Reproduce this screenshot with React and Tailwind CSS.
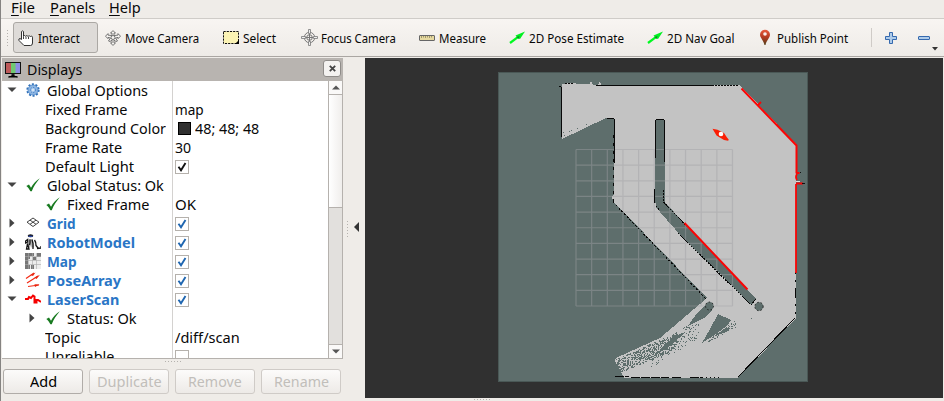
import { useLayoutEffect, useRef, useState } from "react";

// Text squeezed or stretched to a fixed advance width.
function Fit({ w, className = "", children }) {
  const ref = useRef(null);
  const [scale, setScale] = useState(1);
  useLayoutEffect(() => {
    setScale(w / ref.current.offsetWidth);
  }, [w]);
  return (
    <span
      ref={ref}
      className={"inline-block origin-left whitespace-nowrap " + className}
      style={{ transform: `scaleX(${scale})` }}
    >
      {children}
    </span>
  );
}

const Label = ({ w, className = "", children }) => (
  <Fit w={w} className={"text-[15px] leading-[19px] " + className}>{children}</Fit>
);

/* ---------- icons ---------- */

const Hand = () => (
  <svg width="16" height="16" viewBox="0 0 16 16" className="shrink-0">
    <path d="M3.500 9.500V1.500q1-1.300 2 0V6.500q.3-1 1-1t1.200 1q.4-1 1.100-1t1.200 1q.4-.8 1.100-.8t1.200 1q.3-.5 1.200-.5t1 1V13q0 2.500-2 2.500H6L1 10.500Q.3 8.500 2 8.500z" fill="#fff" stroke="#333" strokeWidth="1" />
    <path d="M5.500 7v2M8 7v2M10.500 7v2" stroke="#444" strokeWidth="1" />
  </svg>
);
const Move = () => (
  <svg width="16" height="16" viewBox="0 0 16 16" className="shrink-0">
    <g fill="#f6f4f1" stroke="#666" strokeWidth=".9">
      <path d="M8 .6l2.500 2.500H9v2.500l4-.5V3.600l2.500 2.600-2.500 2.500V7.400L10.500 8l2 3-1.500.5L9 10v3h1.500L8 15.400 5.500 13H7v-3l-2 1.500-1.500-.5 2-3L3 7.400v1.300L.5 6.200 3 3.600v1.500l4 .5V3.100H5.500z" />
      <circle cx="8" cy="7.500" r="2" />
    </g>
  </svg>
);
const SelectIcon = () => (
  <svg width="16" height="16" viewBox="0 0 16 16" className="shrink-0">
    <rect x=".5" y="1.500" width="15" height="12" fill="#fbf3b4" stroke="#111" strokeDasharray="2.200 1" />
    <path d="M16 10v4h-4z" fill="#000" />
  </svg>
);
const Focus = () => (
  <svg width="17" height="17" viewBox="0 0 17 17" className="shrink-0">
    <g fill="none" stroke="#777">
      <circle cx="8.500" cy="8.500" r="5.200" strokeWidth="1" />
      <circle cx="8.500" cy="8.500" r="2.800" strokeWidth="1" />
      <path d="M7.500.5h2v4h-2zM7.500 12.500h2v4h-2zM.5 7.500h4v2h-4zM12.500 7.500h4v2h-4z" fill="#eee" strokeWidth=".8" />
      <path d="M8.500 5v7M5 8.500h7" strokeWidth="1" />
    </g>
  </svg>
);
const Ruler = () => (
  <svg width="16" height="16" viewBox="0 0 16 16" className="shrink-0">
    <rect x=".5" y="5.500" width="15" height="5" rx=".5" fill="#e6d9a0" stroke="#666" />
    <path d="M2.500 6v2M4.500 6v1.500M6.500 6v2M8.500 6v1.500M10.500 6v2M12.500 6v1.500" stroke="#8d8560" strokeWidth=".8" />
  </svg>
);
const GreenArrow = () => (
  <svg width="16" height="16" viewBox="0 0 16 16" className="shrink-0">
    <path d="M1 13L8.500 7.300" stroke="#00fa20" strokeWidth="2.200" />
    <path d="M6.500 5.500L16 1.500 11 9 8.800 8.200z" fill="#00f020" />
    <path d="M7.500 7L10.500 6l-1 3z" fill="#0b8a26" />
  </svg>
);
const Pin = () => (
  <svg width="12" height="17" viewBox="0 0 12 17" className="shrink-0">
    <defs>
      <linearGradient id="pin" x1="0" y1="0" x2="0" y2="1">
        <stop offset="0" stopColor="#ea5a3c" />
        <stop offset=".5" stopColor="#b23a20" />
        <stop offset="1" stopColor="#51401a" />
      </linearGradient>
    </defs>
    <path d="M6 .7a5 5 0 0 1 5 5c0 3-3.500 5.500-4.500 10.300h-1C4.500 11.200 1 8.700 1 5.700a5 5 0 0 1 5-5z" fill="url(#pin)" />
    <circle cx="6" cy="5" r="1.800" fill="#f8efec" />
  </svg>
);
const Plus = () => (
  <svg width="12" height="12" viewBox="0 0 12 12" className="shrink-0">
    <path d="M4.500.5h3v4h4v3h-4v4h-3v-4h-4v-3h4z" fill="#aecbe9" stroke="#3569ae" />
  </svg>
);
const Minus = () => (
  <svg width="12" height="12" viewBox="0 0 12 12" className="shrink-0">
    <rect x=".5" y="4.500" width="11" height="3" rx=".5" fill="#aecbe9" stroke="#3569ae" />
  </svg>
);
const Monitor = () => (
  <svg width="16" height="16" viewBox="0 0 16 16" className="shrink-0">
    <rect x=".5" y=".5" width="15" height="11" fill="#000" stroke="#111" />
    <path d="M1 1h5v10H1z" fill="#bd5959" />
    <path d="M6 1h5v10H6z" fill="#70c970" />
    <path d="M10.500 1H15v10h-4.500z" fill="#8d8de4" />
    <path d="M6.500 12h3v2h-3z" fill="#222" />
    <path d="M3.500 15q4.500-2.500 9 0z" fill="#000" stroke="#000" />
  </svg>
);
const Gear = () => (
  <svg width="14" height="14" viewBox="0 0 14 14">
    <circle cx="7" cy="7" r="5.700" fill="none" stroke="#2f6fb8" strokeWidth="1.900" strokeDasharray="2 1.580" />
    <circle cx="7" cy="7" r="5" fill="#8fb7e4" stroke="#4b86c8" strokeWidth=".8" />
    <circle cx="7" cy="7" r="2.600" fill="#a9c9ec" stroke="#3f7cc2" strokeDasharray="1.400 1" />
    <circle cx="7" cy="7" r=".9" fill="#e9f2fb" />
  </svg>
);
const Tick = () => (
  <svg width="14" height="14" viewBox="0 0 14 14">
    <path d="M.3 8L3 6.500l2 3.300C7 6 10 2.500 13.800.3 10.300 4.500 7.500 8.500 5.800 13.300H4.400C3.200 11 2 9.300.3 8z" fill="#187a20" />
  </svg>
);
const GridIcon = () => (
  <svg width="14" height="12" viewBox="0 0 14 12">
    <path d="M7 1L13 5.200 7 9.500 1 5.200zM4 3.100L10 7.300M10 3.100L4 7.300" fill="none" stroke="#444" strokeWidth="1" />
  </svg>
);
const Robot = () => (
  <svg width="16" height="16" viewBox="0 0 16 16">
    <ellipse cx="5.500" cy="1.800" rx="2.800" ry="1.500" fill="#171717" />
    <path d="M3.500 2.300h4" stroke="#3150c4" strokeWidth="1.100" />
    <path d="M2 6l3-1 2.500.5 1 3 .5 5H6.500l-.5-3-1 3H2.500l.5-5z" fill="#b5b5b5" />
    <path d="M.6 7l2-1.500v2.500L.6 9zM2.500 9.500l1.500 5.500H1.500zM5 5.500v3.500l-.5 2M7 5.500l1 4v5.500M9.500 6q1.500 2 1.500 5.500l2 2.500M12 14.500l4-.5V12" stroke="#151515" strokeWidth="1.300" fill="none" />
  </svg>
);
const MapIcon = () => (
  <svg width="16" height="16" viewBox="0 0 16 16">
    <path d="M0 0h16v16H0z" fill="#ededed" />
    <path d="M0 0h9v3H5v3H0zM0 6h3v6H0zM8 4h3v3H8zM12 0h4v4h-4zM0 12h5v4H0zM6 12h3v4H6z" fill="#777" />
    <path d="M3.500 0v16M7.500 0v16M11.500 0v16M0 3.500h16M0 7.500h16M0 11.500h16" stroke="#aaa" strokeWidth=".6" />
  </svg>
);
const Poses = () => (
  <svg width="16" height="16" viewBox="0 0 16 16">
    <path d="M1 6.500L9 1M2 11L13 4M3 14.500L14 13" stroke="#f32a14" strokeWidth="1.200" />
    <path d="M5.500 3L10.500.4 8 4zM9.500 5.400L15 2.800 11.500 7zM9.500 12.300l5 .2L10 15z" fill="#e62510" />
  </svg>
);
const Laser = () => (
  <svg width="16" height="12" viewBox="0 0 16 12">
    <path d="M0 6h3l1-2 2 1 2-2.500 1.500 1V9.500h2V7h1.500L16 9" fill="none" stroke="#f50000" strokeWidth="2" />
  </svg>
);

/* ---------- tree ---------- */

const Box = ({ color, on = true }) => (
  <span className="flex h-[14px] w-[14px] items-center justify-center border border-[#b5b1ac] bg-white">
    {on && (
      <svg width="10" height="10" viewBox="0 0 10 10">
        <path d="M1.500 4.800L4 8.300 8.500 1" fill="none" stroke={color} strokeWidth="1.900" />
      </svg>
    )}
  </span>
);
const blueBox = <Box color="#1f66b0" />;

const rows = [
  { open: true, icon: <Gear />, text: "Global Options", w: 101 },
  { text: "Fixed Frame", w: 82, value: <Label w={29}>map</Label> },
  {
    text: "Background Color", w: 121,
    value: (
      <span className="flex items-center gap-1 pl-[2.500px]">
        <span className="h-[13px] w-[13px] border border-black bg-[#303030]" />
        <Label w={64}>48; 48; 48</Label>
      </span>
    ),
  },
  { text: "Frame Rate", w: 77, value: <Label w={16}>30</Label> },
  { text: "Default Light", w: 89, value: <Box color="#111" /> },
  { open: true, icon: <Tick />, text: "Global Status: Ok", w: 117 },
  { sub: true, icon: <Tick />, text: "Fixed Frame", w: 82, value: <Label w={21}>OK</Label> },
  { open: false, bold: true, icon: <GridIcon />, text: "Grid", w: 29, value: blueBox },
  { open: false, bold: true, icon: <Robot />, text: "RobotModel", w: 88, value: blueBox },
  { open: false, bold: true, icon: <MapIcon />, text: "Map", w: 30, value: blueBox },
  { open: false, bold: true, icon: <Poses />, text: "PoseArray", w: 74, value: blueBox },
  { open: true, bold: true, icon: <Laser />, text: "LaserScan", w: 72, value: blueBox },
  { sub: true, open: false, icon: <Tick />, text: "Status: Ok", w: 70 },
  { text: "Topic", w: 36, value: <Label w={65}>/diff/scan</Label> },
  { text: "Unreliable", w: 69, value: <Box on={false} /> },
];

const Twisty = ({ open }) => (
  <svg width="10" height="10" viewBox="0 0 10 10">
    <path d={open ? "M.5 2.500h9L5 7z" : "M2.500.5v9L7.500 5z"} fill="#444" />
  </svg>
);

function Row({ row }) {
  return (
    <div className="flex h-[19px] shrink-0 items-center">
      <div className={"flex h-full w-[171px] shrink-0 items-center border-r border-[#d4d2d0] pb-px " + (row.sub ? "pl-[25px]" : "pl-[5px]")}>
        <span className="flex w-[10px] justify-center">{row.open !== undefined && <Twisty open={row.open} />}</span>
        {row.icon && <span className="ml-[7px] flex w-[17px] justify-center">{row.icon}</span>}
        <span className={"flex " + (row.icon ? "ml-[6px]" : "ml-[28px]")}>
          <Label w={row.w} className={row.bold ? "font-bold text-[#2a76c6]" : ""}>{row.text}</Label>
        </span>
      </div>
      <div className="flex items-center pl-[2px]">{row.value}</div>
    </div>
  );
}

/* ---------- map ---------- */

function noise(seed) {
  let s = seed;
  return () => {
    s = (s * 1664525 + 1013904223) % 4294967296;
    return s / 4294967296;
  };
}

// Unit-pixel speckle path over the scattered scan region.
function speckle(seed, count, place) {
  const rnd = noise(seed);
  let d = "";
  for (let i = 0; i < count; i++) {
    const [x, y] = place(rnd);
    d += `M${Math.round(x)} ${Math.round(y)}h1v1h-1z`;
  }
  return d;
}
const fan = speckle(7, 620, (r) => {
  const t = r();
  const top = 359 - t * 28;
  const bottom = 374 - t * 26;
  return [616 + t * 62, top + r() * (bottom - top)];
});
const loose = speckle(19, 150, (r) => {
  const t = r();
  return [650 + t * 48, 354 - t * 30 + (r() - 0.3) * 20];
});
const tail = speckle(31, 70, (r) => {
  const t = r();
  return [708 + t * 28, 339 - t * 16 + (r() - 0.5) * 6];
});

const gridPath = Array.from({ length: 11 }, (_, i) => {
  const p = i * 15.65;
  return `M${576 + p} 149.500v156.500M576 ${149.5 + p}h156.500`;
}).join("");

const MapView = () => (
  <svg width="310" height="310" viewBox="498 72 310 310" className="block">
    <rect x="498" y="72" width="310" height="310" fill="#5e6e6c" />
    <g shapeRendering="crispEdges">
      <path d="M562 84h4l1-1h8l1 1h14l1-3 2 4h5l2-4 1 4h139l56 59v174l-58 60H624l-9-17 1-3 44-20 47-40-94-97-1-4 2-3V118h-8L562 139z" fill="#c3c3c3" />
      <path d="M655.500 120l1-1h7l1 1v82l92 97-5 6-73-72-22-25-2-10z" fill="#5e6e6c" />
      <path d="M706 304l-9 9-9 13 16-8 9-8zM718 314l13 6-3 5-12 9-14 9 8-14zM732 327l-9 3-9 6 12-4zM687 331l-13 6-10 8-8 10 14-9z" fill="#5e6e6c" />
      <path d={fan + loose + tail} fill="#5e6e6c" />
      <path d="M563 132h1v1h-1zM569 131h1v1h-1zM564 135h1v1h-1zM577 128h1v1h-1zM571 130h1v1h-1zM586 124h1v1h-1zM751 318h1v1h-1z" fill="#5e6e6c" />
    </g>
    <path d={gridPath} fill="none" stroke="#a0a0a4" strokeOpacity=".45" strokeWidth="1.200" />
    <g fill="#5e6e6c" stroke="#101010" strokeWidth=".8" strokeDasharray="1.500 2">
      <circle cx="709.500" cy="306" r="4" />
      <circle cx="759" cy="306.500" r="4.200" />
    </g>
    <g fill="none" stroke="#080808" strokeWidth="1" shapeRendering="crispEdges">
      <path d="M561.500 87v50M596 85.500h80M656 85.500h58M607 118.500h7M614.500 119v44" />
      <path d="M565 83.500h8M559 86.500h3M715 85.500h24" strokeDasharray="2 1" />
      <path d="M613.500 135v68" strokeDasharray="3 5" />
      <path d="M613 202l94 98" strokeDasharray="2 2" />
      <path d="M656 119.500h8M655.500 120v38M664.500 120v42M654.500 189v14" />
      <path d="M663.500 190v12l22 23M656 206l4 5M678 233l73 72 5-6" strokeDasharray="2 1" />
      <path d="M795.500 288v9M738 377l57-59" />
      <path d="M795.500 272v45" strokeDasharray="2 6" />
      <path d="M615 376.500h14M631 377.500h38M672 377.500h10M690 377.500h12" strokeDasharray="9 1" />
      <path d="M702 377.500h18" strokeDasharray="1 3" />
    </g>
    <g fill="none" stroke="#fa0505" strokeWidth="2">
      <path d="M741.500 88.500l55 57v28M684.500 223l63 66.500" />
      <path d="M758 105l3-3M796.500 173h3M797 174q-2 3 0 6M796 183.500h7M796 184v89" strokeWidth="1.800" />
    </g>
    <path d="M800 172.500h1M802 183.500h3" stroke="#111" />
    <path d="M796 181.500h4" stroke="#ddd" />
    <path d="M712.500 128.700l5 1 6.500 3.300 3 4.500 1.700 2-.5 1.200-4.200-.7-7.500-4.500z" fill="#fb1e05" />
    <circle cx="721" cy="134" r="2.300" fill="#fff" />
    <path d="M498.500 72v310M498 72.500h310M807.500 72v310M498 381.500h310" stroke="#4a5856" />
  </svg>
);

const Tool = ({ icon, text, w, className = "" }) => (
  <div className={"flex shrink-0 items-center " + className}>
    <span className="flex w-[16px] shrink-0 justify-center">{icon}</span>
    <span className="ml-[4px] flex">
      <Fit w={w} className="text-[13px] leading-[18px]">{text}</Fit>
    </span>
  </div>
);

const Menu = ({ text, w }) => (
  <div className="flex">
    <Fit w={w} className="text-[15px] leading-[15px]">
      <span className="underline decoration-1 underline-offset-2">{text[0]}</span>
      {text.slice(1)}
    </Fit>
  </div>
);

const Button = ({ text, w, off }) => (
  <div className={"flex h-[25px] w-[80px] items-center justify-center rounded-[3px] border bg-gradient-to-b from-[#fcfbfa] to-[#edeae7] " + (off ? "border-[#cfcbc7] text-[#c1beba]" : "border-[#b0aca8] text-black")}>
    <span className="flex shrink-0 justify-start" style={{ width: w }}>
      <Label w={w}>{text}</Label>
    </span>
  </div>
);

export default function App() {
  return (
    <div className="flex h-[401px] w-[944px] flex-col overflow-hidden border-l border-[#858381] bg-[#efece8] font-['Noto_Sans','Open_Sans',sans-serif] text-[#080808]">
      <div className="grid h-[19px] shrink-0 grid-cols-[39px_59px_100px] border-b border-[#cfccc8] pl-[10px] leading-none">
        <Menu text="File" w={24} />
        <Menu text="Panels" w={45} />
        <Menu text="Help" w={32} />
      </div>
      <div className="flex h-[38px] shrink-0 items-center border-b border-[#aaa6a2] bg-gradient-to-b from-[#f8f5f2] to-[#eeebe7] pl-[5px]">
        <div className="h-[17px] w-[4px] bg-[radial-gradient(#b5b2ae_0.8px,transparent_0.9px)] bg-[size:3px_3px]" />
        <div className="ml-[3px] flex h-[31px] w-[85px] shrink-0 items-center rounded-[3px] border border-[#aba8a4] bg-[#dedbd8] pl-[4px]">
          <Tool icon={<Hand />} text="Interact" w={42} />
        </div>
        <div className="grid shrink-0 grid-cols-[118px_78px_118px_90px_138px_110px_114px] pl-[7px]">
          <Tool icon={<Move />} text="Move Camera" w={74} />
          <Tool icon={<SelectIcon />} text="Select" w={33} />
          <Tool icon={<Focus />} text="Focus Camera" w={75} />
          <Tool icon={<Ruler />} text="Measure" w={47} />
          <Tool icon={<GreenArrow />} text="2D Pose Estimate" w={95} />
          <Tool icon={<GreenArrow />} text="2D Nav Goal" w={67} />
          <Tool icon={<Pin />} text="Publish Point" w={71} />
        </div>
        <div className="h-[19px] w-px bg-[#cfcbc7]" />
        <div className="ml-[13px]"><Plus /></div>
        <div className="relative ml-[21px]">
          <Minus />
          <svg width="6" height="4" viewBox="0 0 6 4" className="absolute left-[14px] top-[15px]">
            <path d="M0 0h6L3 3.500z" fill="#333" />
          </svg>
        </div>
      </div>
      <div className="flex h-[344px] shrink-0">
        <div className="flex w-[342px] shrink-0 flex-col pl-px pt-px">
          <div className="flex h-[23px] shrink-0 items-center bg-[#b8b4b0] pl-[3px] pr-[2px]">
            <Monitor />
            <span className="ml-[6px] flex flex-1"><Label w={55}>Displays</Label></span>
            <span className="mb-[2px] flex h-[17px] w-[18px] items-center justify-center rounded-[3px] border border-[#8f8c89] bg-[#f4f2f0]">
              <svg width="7" height="7" viewBox="0 0 7 7"><path d="M.8.8l5.400 5.400M6.200.8L.8 6.200" stroke="#444" strokeWidth="1.800" /></svg>
            </span>
          </div>
          <div className="flex h-[278px] shrink-0 border-b border-r border-[#b5b1ad] bg-white">
            <div className="flex h-full flex-1 flex-col overflow-hidden">
              {rows.map((row, i) => <Row key={i} row={row} />)}
            </div>
            <div className="flex w-[14px] flex-col border-l border-[#b5b1ad] bg-[#e2e0dd]">
              <div className="flex h-[14px] items-center justify-center border-b border-[#b5b1ad] bg-[#faf9f8]">
                <svg width="8" height="5" viewBox="0 0 8 5"><path d="M0 4.500h8L4 .5z" fill="#555" /></svg>
              </div>
              <div className="h-[113px] border-b border-[#b5b1ad] bg-gradient-to-r from-white to-[#f0eeec]" />
              <div className="flex-1" />
              <div className="flex h-[14px] items-center justify-center border-t border-[#b5b1ad] bg-[#faf9f8]">
                <svg width="8" height="5" viewBox="0 0 8 5"><path d="M0 .5h8L4 4.500z" fill="#555" /></svg>
              </div>
            </div>
          </div>
          <div className="ml-[162px] mt-px h-[3px] w-[18px] bg-[radial-gradient(#b5b2ae_0.8px,transparent_0.9px)] bg-[size:3px_3px]" />
          <div className="mt-[6px] flex gap-[6px] pl-px">
            <Button text="Add" w={27} />
            <Button text="Duplicate" w={65} off />
            <Button text="Remove" w={54} off />
            <Button text="Rename" w={55} off />
          </div>
        </div>
        <div className="flex w-[22px] shrink-0 items-start pl-[3px] pt-[163px]">
          <div className="h-[17px] w-[3px] bg-[radial-gradient(#b5b2ae_0.8px,transparent_0.9px)] bg-[size:3px_3px]" />
          <svg width="5" height="10" viewBox="0 0 5 10" className="ml-[5px] mt-[2px]"><path d="M5 0v10L0 5z" fill="#333" /></svg>
        </div>
        <div className="flex w-[578px] shrink-0 flex-col pt-px">
          <div className="h-[340px] bg-[#303030] pl-[133px] pt-[14px]">
            <MapView />
          </div>
          <div className="ml-[108px] h-[3px] w-[18px] bg-[radial-gradient(#b5b2ae_0.8px,transparent_0.9px)] bg-[size:3px_3px]" />
        </div>
      </div>
    </div>
  );
}
